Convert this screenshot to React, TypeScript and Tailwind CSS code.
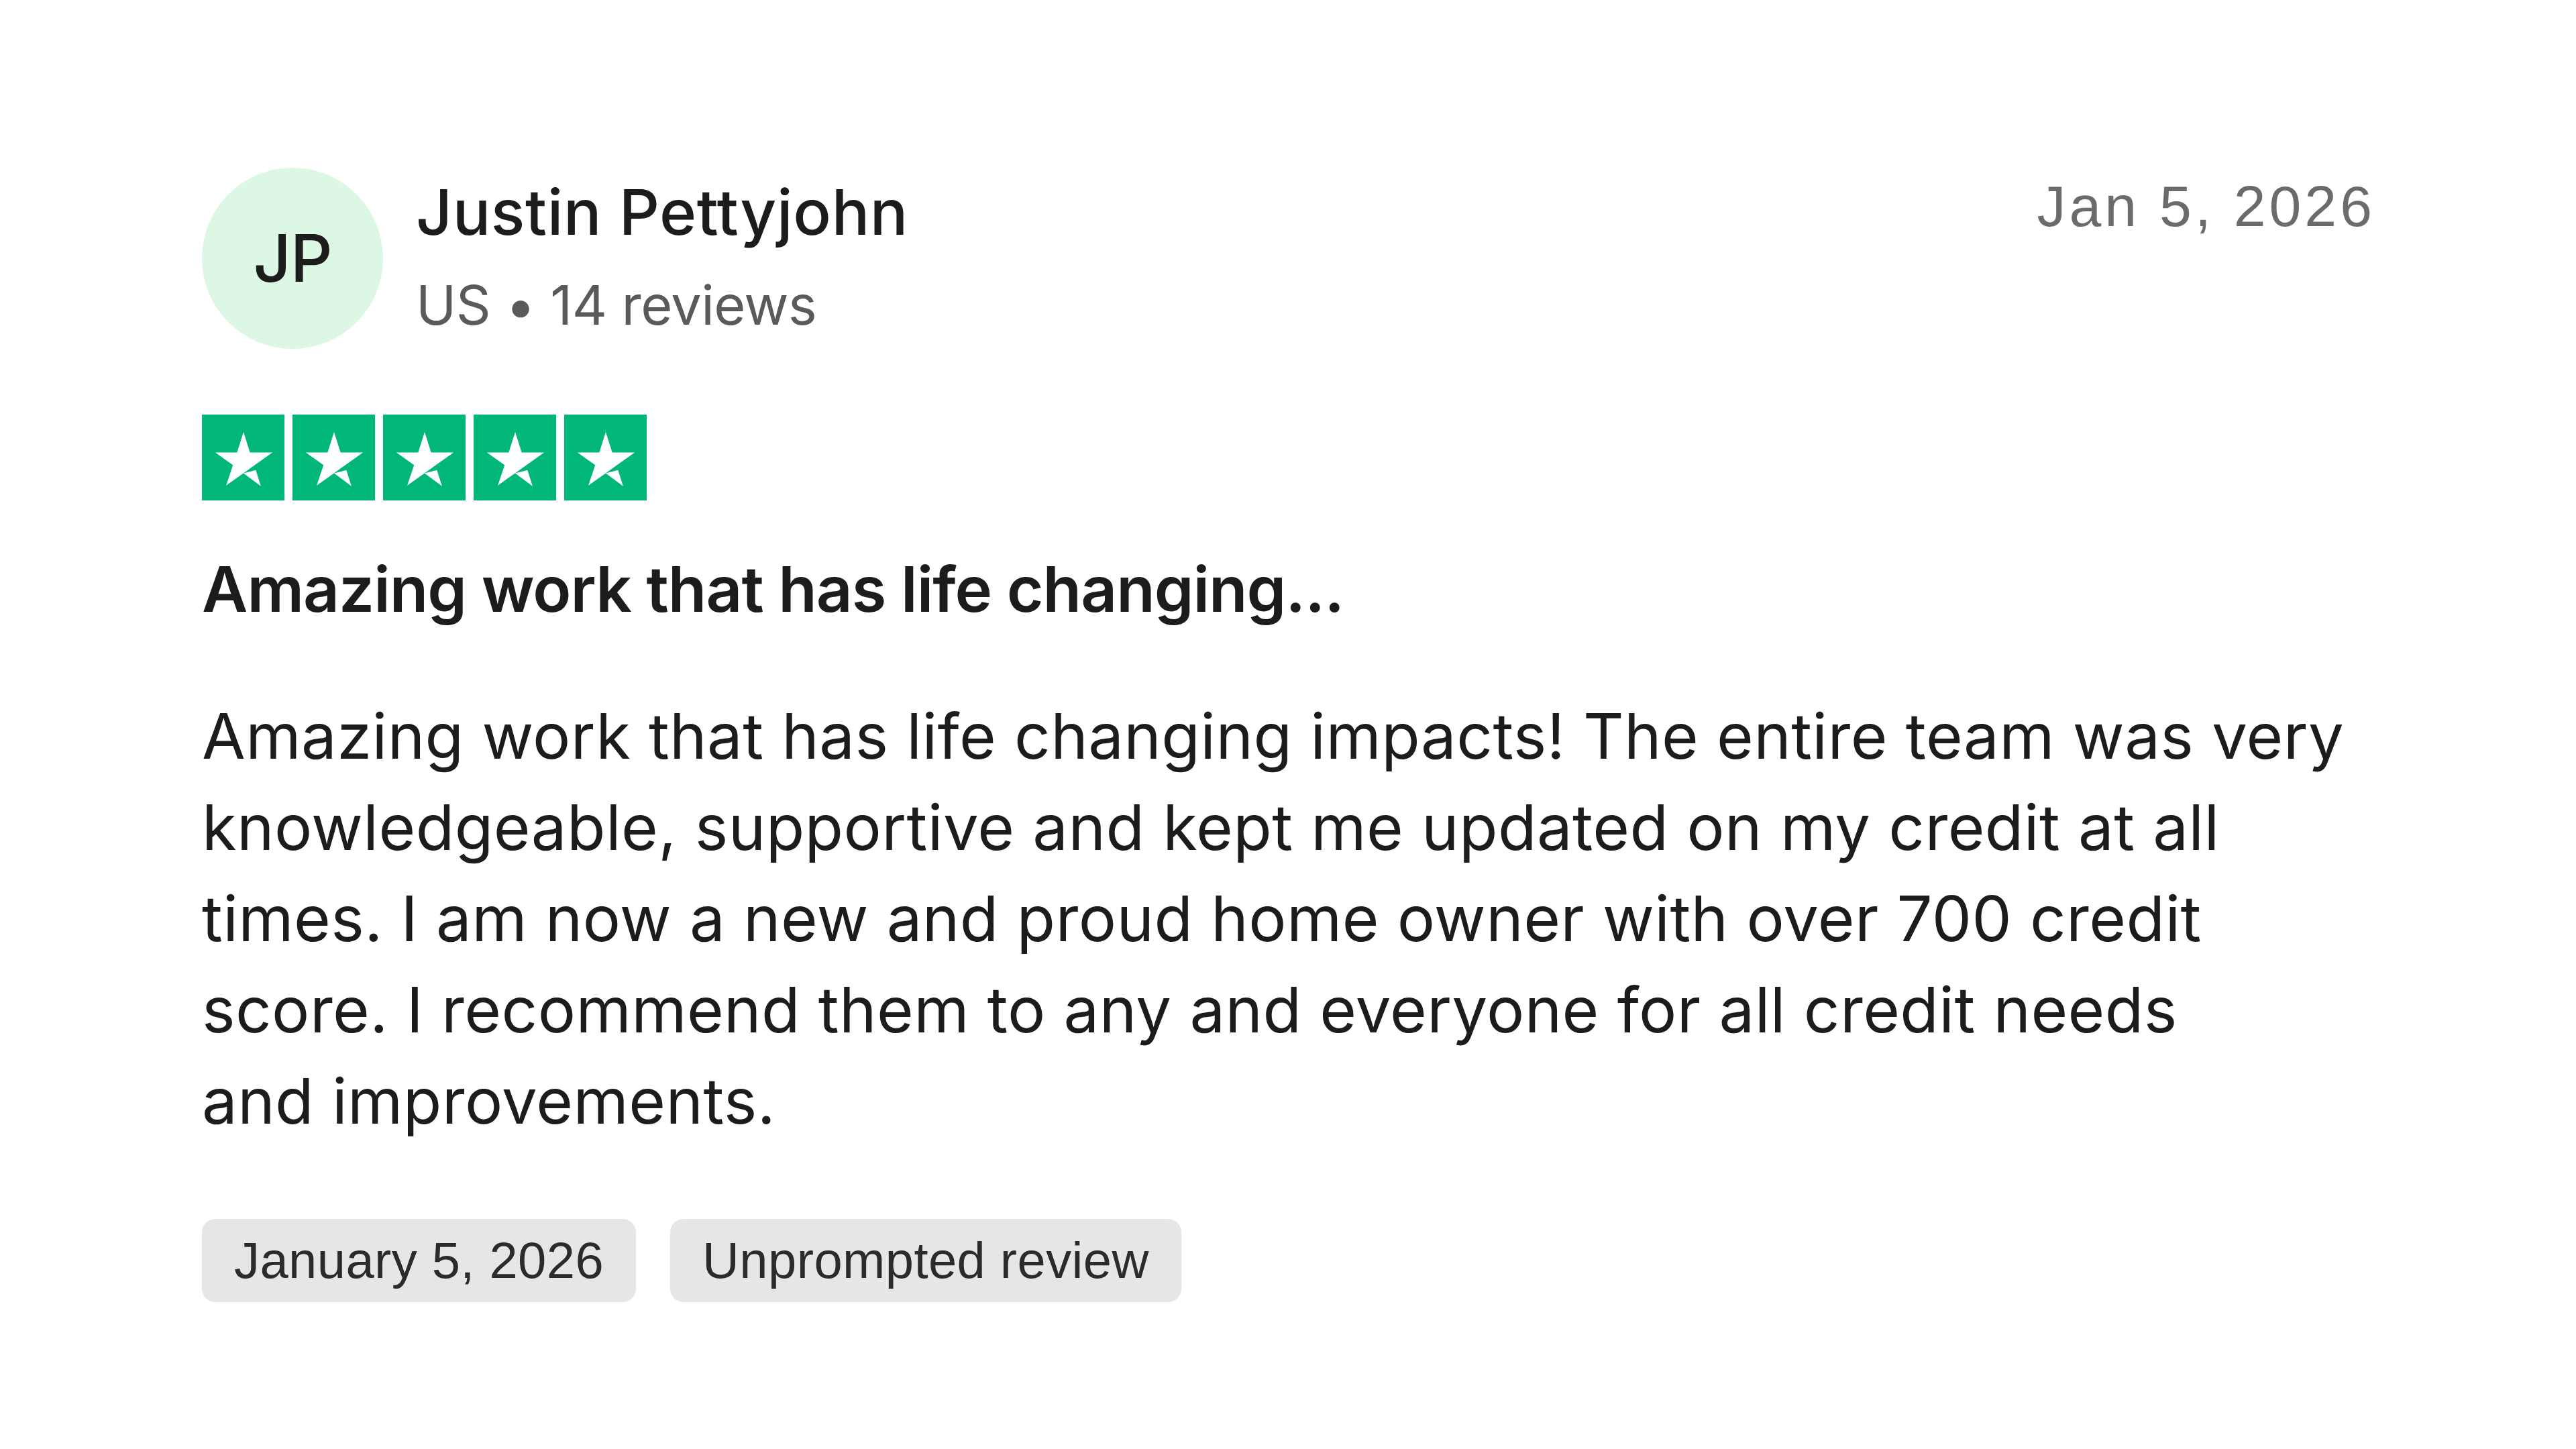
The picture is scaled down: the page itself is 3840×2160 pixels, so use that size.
import React from "react";

const Star = () => (
  <div className="w-[123px] h-[128px] bg-[#00b67a] flex items-center justify-center">
    <svg viewBox="0 0 24 24" className="w-[122px] h-[122px]">
      <path
        fill="#ffffff"
        d="M12 16.6l3.6-.9 1.5 4.7-5.1-3.8zm8.3-6.1h-6.4L12 4.5l-1.9 6H3.7l5.2 3.7-2 6 5.2-3.7 3.2-2.3 5.2-3.7z"
      />
    </svg>
  </div>
);

export default function App() {
  return (
    <div className="w-[3840px] h-[2160px] bg-white font-['Inter',sans-serif] text-[#1c1c1c]">
      <div className="ml-[301px] pt-[250px] w-[3240px]">
        <div className="flex justify-between items-start">
          <div className="flex items-start gap-[49px]">
            <div className="w-[270px] h-[270px] rounded-full bg-[#dcf7e3] flex items-center justify-center">
              <span className="text-[98px] leading-none font-medium tracking-[-1px]">JP</span>
            </div>
            <div className="flex flex-col">
              <div className="text-[94px] leading-[136px] font-medium tracking-[0.6px] mt-[-2px]">Justin Pettyjohn</div>
              <div className="text-[81px] leading-[112px] text-[#5a5a5a] mt-[15px] tracking-[-0.6px]">
                US • 14 reviews
              </div>
            </div>
          </div>
          <div className="mt-[9px] font-['Liberation_Sans',Arial,sans-serif] text-[86px] leading-[96px] tracking-[5px] text-[#6b6b6b]">
            Jan 5, 2026
          </div>
        </div>

        <div className="mt-[98px] flex gap-[12px]">
          <Star />
          <Star />
          <Star />
          <Star />
          <Star />
        </div>

        <h2 className="mt-[64px] text-[94px] leading-[136px] font-semibold tracking-[-1px]">
          Amazing work that has life changing...
        </h2>

        <p className="mt-[83px] text-[94px] leading-[136px] tracking-[0.4px] whitespace-nowrap">
          Amazing work that has life changing impacts! The entire team was very
          <br />
          knowledgeable, supportive and kept me updated on my credit at all
          <br />
          times. I am now a new and proud home owner with over 700 credit
          <br />
          score. I recommend them to any and everyone for all credit needs
          <br />
          and improvements.
        </p>

        <div className="mt-[108px] flex gap-[51px] font-['Liberation_Sans',Arial,sans-serif]">
          <span className="h-[124px] px-[48px] flex items-center rounded-[20px] bg-[#e6e6e6] text-[76px] tracking-[0.4px] text-[#2b2b2b]">
            January 5, 2026
          </span>
          <span className="h-[124px] px-[48px] flex items-center rounded-[20px] bg-[#e6e6e6] text-[76px] tracking-[0.4px] text-[#2b2b2b]">
            Unprompted review
          </span>
        </div>
      </div>
    </div>
  );
}
